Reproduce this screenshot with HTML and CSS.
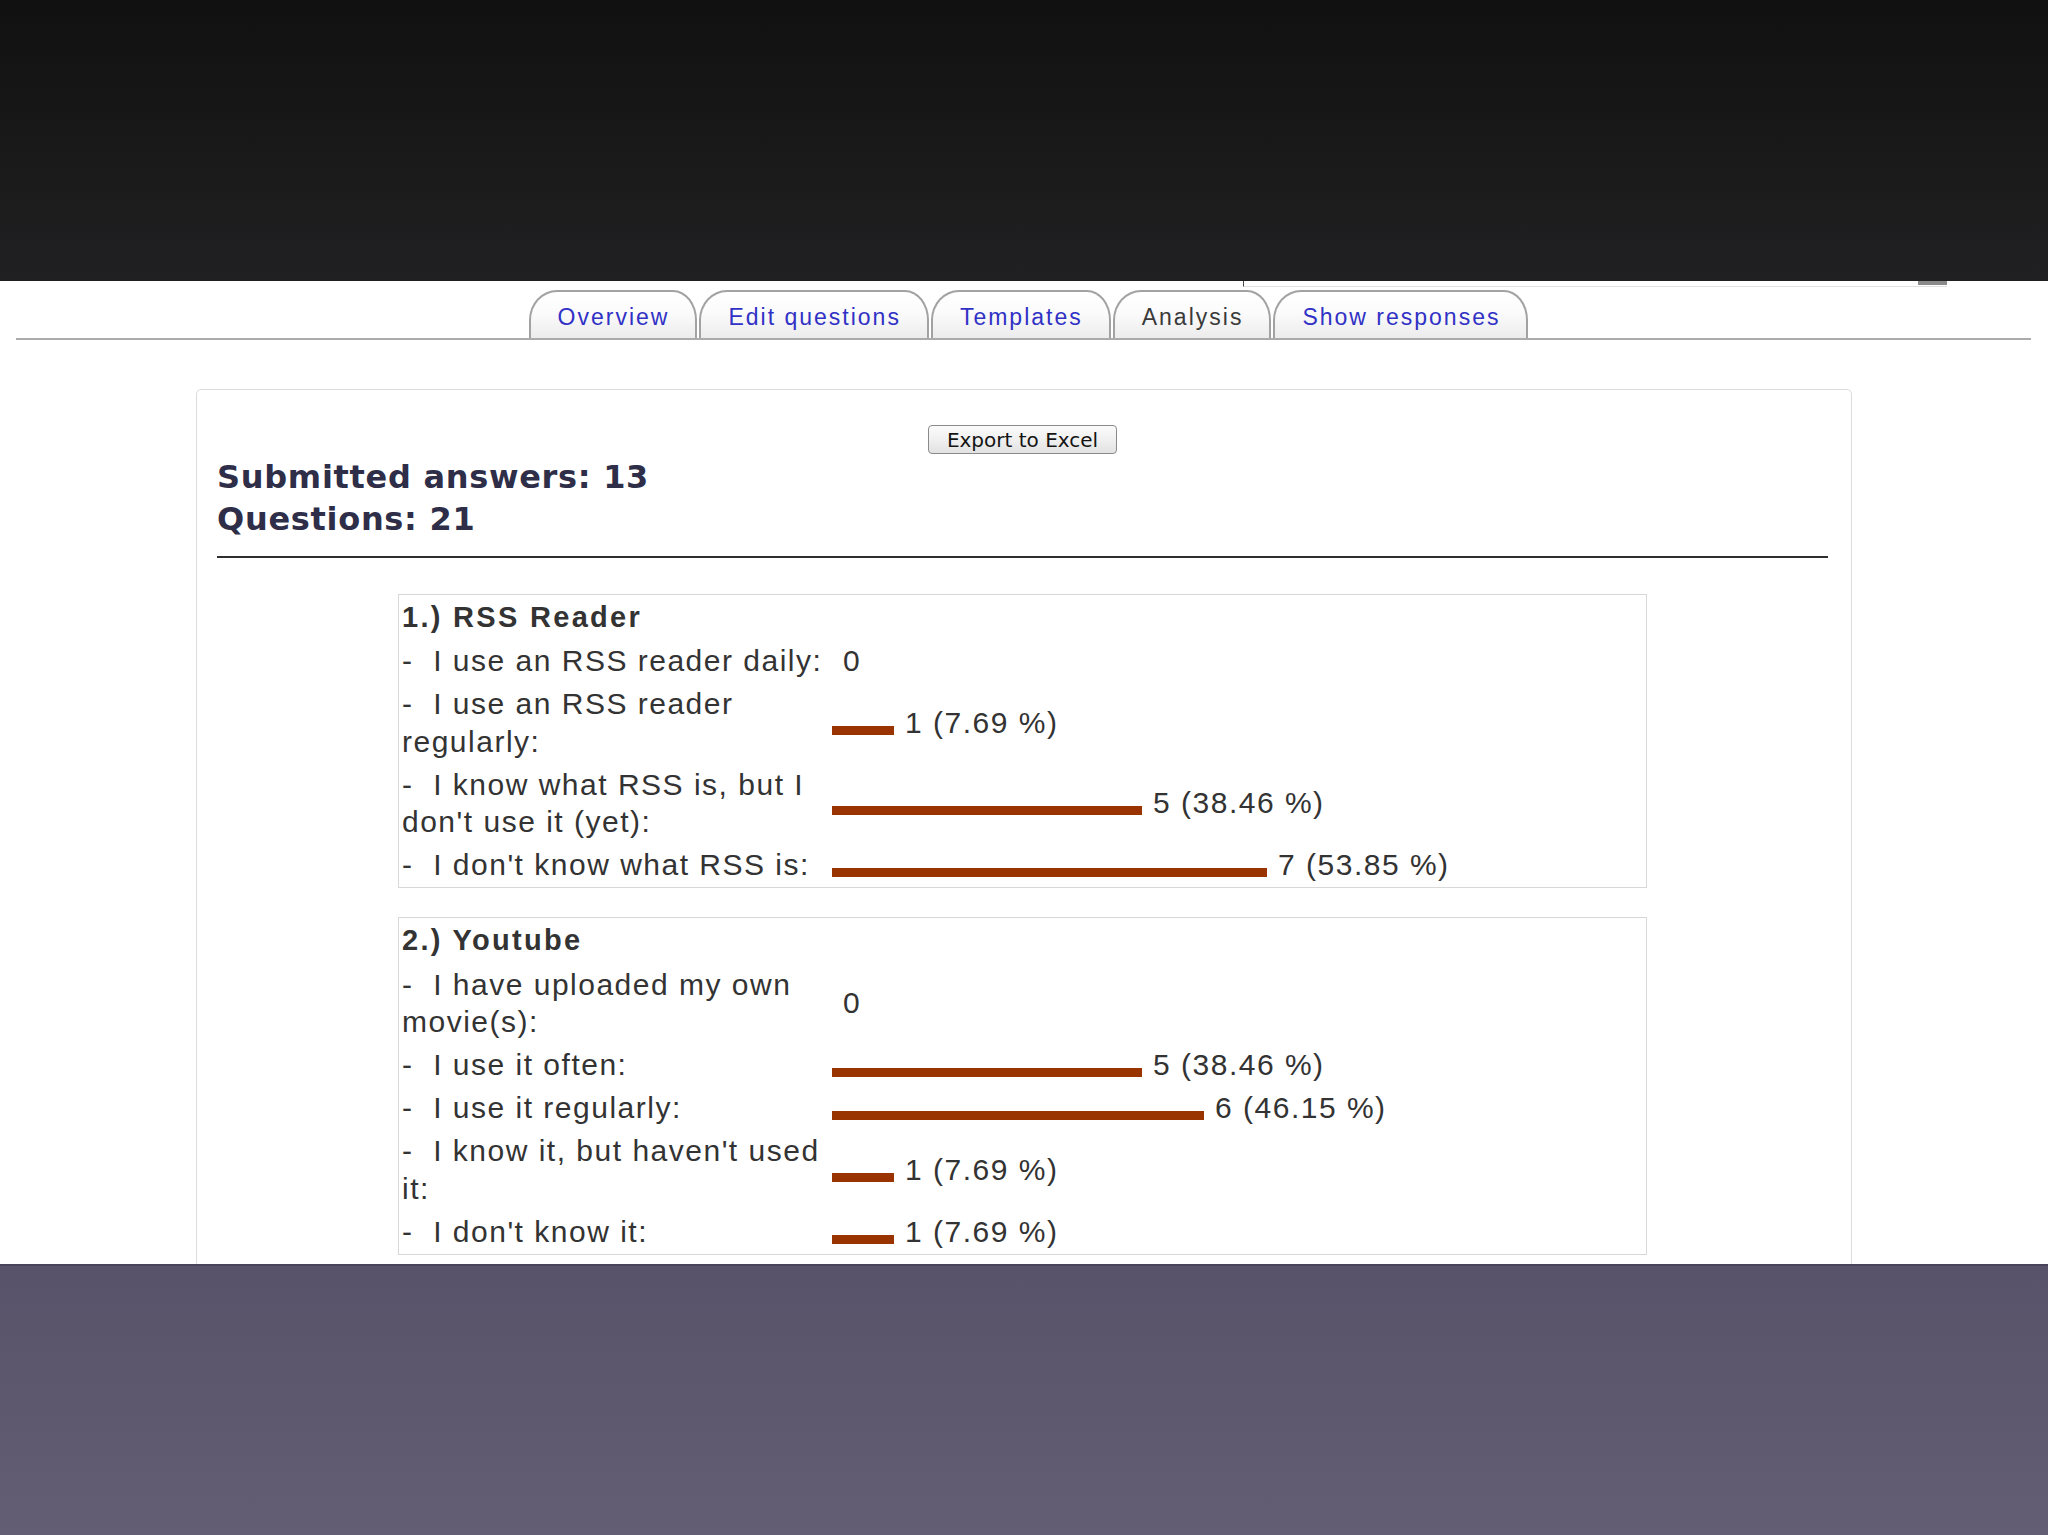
FILE: index.html
```html
<!DOCTYPE html>
<html lang="en">
<head>
<meta charset="utf-8">
<title>Feedback – Analysis</title>
<link rel="stylesheet" href="styles.css">
</head>
<body>
<div class="topband"></div>
<div class="page">
  <div class="frag"><span class="frag-block"></span></div>
  <div class="tabrow">
    <ul class="tabs">
      <li class="tab"><a href="#">Overview</a></li>
      <li class="tab"><a href="#">Edit questions</a></li>
      <li class="tab"><a href="#">Templates</a></li>
      <li class="tab current"><span>Analysis</span></li>
      <li class="tab"><a href="#">Show responses</a></li>
    </ul>
  </div>
  <div class="box">
    <div class="export"><button class="btn" type="button">Export to Excel</button></div>
    <div class="stats">
      <div>Submitted answers: 13</div>
      <div>Questions: 21</div>
    </div>
    <hr class="rule">
    <table class="q">
      <tr><td class="title" colspan="2">1.) RSS Reader</td></tr>
      <tr><td class="label">-&nbsp; I use an RSS reader daily:</td><td class="val"><span class="bar" style="width:0px"></span>0</td></tr>
      <tr><td class="label">-&nbsp; I use an RSS reader regularly:</td><td class="val"><span class="bar" style="width:62px"></span>1 (7.69 %)</td></tr>
      <tr><td class="label">-&nbsp; I know what RSS is, but I don't use it (yet):</td><td class="val"><span class="bar" style="width:310px"></span>5 (38.46 %)</td></tr>
      <tr><td class="label">-&nbsp; I don't know what RSS is:</td><td class="val"><span class="bar" style="width:435px"></span>7 (53.85 %)</td></tr>
    </table>
    <table class="q">
      <tr><td class="title" colspan="2">2.) Youtube</td></tr>
      <tr><td class="label">-&nbsp; I have uploaded my own movie(s):</td><td class="val"><span class="bar" style="width:0px"></span>0</td></tr>
      <tr><td class="label">-&nbsp; I use it often:</td><td class="val"><span class="bar" style="width:310px"></span>5 (38.46 %)</td></tr>
      <tr><td class="label">-&nbsp; I use it regularly:</td><td class="val"><span class="bar" style="width:372px"></span>6 (46.15 %)</td></tr>
      <tr><td class="label">-&nbsp; I know it, but haven't used it:</td><td class="val"><span class="bar" style="width:62px"></span>1 (7.69 %)</td></tr>
      <tr><td class="label">-&nbsp; I don't know it:</td><td class="val"><span class="bar" style="width:62px"></span>1 (7.69 %)</td></tr>
    </table>
  </div>
</div>
<div class="bottomband"></div>
</body>
</html>
```

FILE: styles.css
```css
html, body {
  margin: 0;
  padding: 0;
}
body {
  width: 2048px;
  height: 1535px;
  overflow: hidden;
  background: #ffffff;
  font-family: "Liberation Sans", Arial, sans-serif;
}

.topband {
  height: 281px;
  background: linear-gradient(#111111, #151515 30%, #1c1c1d 70%, #201f21);
}

.page {
  position: relative;
  height: 983px;
  overflow: hidden;
  background: #ffffff;
}

.frag {
  position: absolute;
  top: 0;
  left: 1243px;
  width: 703px;
  height: 5px;
  border-left: 1px solid #4a4a4a;
  border-bottom: 1px solid #e2e2e2;
}
.frag-block {
  position: absolute;
  top: 0;
  right: 0;
  width: 29px;
  height: 4px;
  background: #8a8a8a;
}

.tabrow {
  margin: 0 17px 0 16px;
  padding: 9px 0 0 10px;
  border-bottom: 2px solid #ababab;
}
.tabs {
  list-style: none;
  margin: 0;
  padding: 0;
  display: flex;
  justify-content: center;
  gap: 2px;
}
.tab {
  height: 48px;
  box-sizing: border-box;
  padding: 4px 26px 0 27px;
  border: 2px solid #a2a2a2;
  border-bottom: 0;
  border-radius: 28px 24px 0 0 / 30px 30px 0 0;
  background: linear-gradient(#ffffff, #fbfbfb 45%, #ececec);
  font-size: 23px;
  letter-spacing: 2px;
  line-height: 43px;
  white-space: nowrap;
}
.tab a {
  color: #3131c6;
  text-decoration: none;
}
.tab.current span {
  color: #3a3a3a;
}

.box {
  margin: 49px 196px 0 196px;
  border: 1px solid #dcdcdc;
  border-radius: 5px;
  padding: 0 23px 60px 20px;
}

.export {
  text-align: center;
  padding-top: 35px;
}
.btn {
  height: 29px;
  padding: 0 18px;
  border: 1px solid #8a8a8a;
  border-radius: 4px;
  background: linear-gradient(#fbfbfb, #f0f0f0 50%, #e2e2e2);
  font-family: "DejaVu Sans", Verdana, sans-serif;
  font-size: 20px;
  line-height: 26px;
  color: #141414;
}

.stats {
  margin-top: 2px;
  font-family: "DejaVu Sans", Verdana, sans-serif;
  font-weight: bold;
  font-size: 32px;
  letter-spacing: 0.7px;
  line-height: 42px;
  color: #2e2e48;
}

.rule {
  margin: 16px 0 0 0;
  border: 0;
  height: 2px;
  background: #2f2f2f;
}

.q {
  width: 1249px;
  margin: 36px auto 0 auto;
  border: 1px solid #d8d8d8;
  border-spacing: 2px;
  font-size: 30px;
  letter-spacing: 1.5px;
  line-height: 37.2px;
  color: #333333;
}
.q + .q {
  margin-top: 29px;
}
.q td {
  padding: 2px 1px;
  vertical-align: middle;
}
.q .title {
  font-weight: bold;
  font-size: 29px;
  letter-spacing: 2.3px;
}
.q .label {
  width: 426px;
}
.q .val {
  white-space: nowrap;
}
.bar {
  display: inline-block;
  height: 9px;
  margin-right: 11px;
  vertical-align: -2px;
  background: #993300;
}

.bottomband {
  height: 269px;
  border-top: 2px solid #47435a;
  background: linear-gradient(#58536a, #5d586d 50%, #635e73);
}
```
